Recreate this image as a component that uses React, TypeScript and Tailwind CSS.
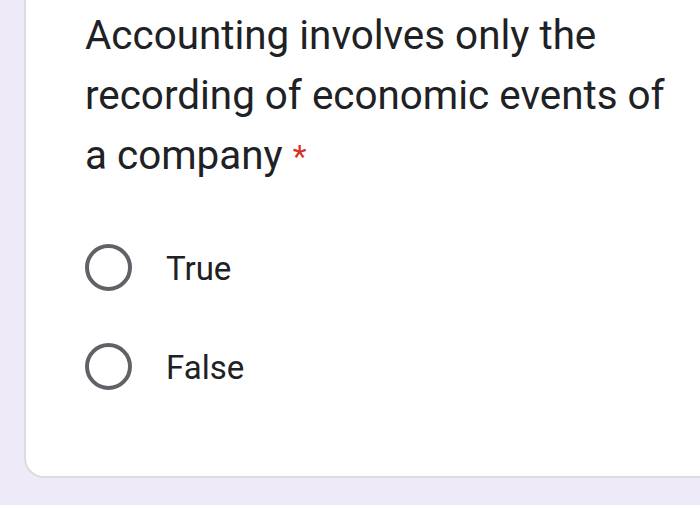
export default function App() {
  return (
    <div className="w-[700px] h-[505px] bg-[#eeeaf7] overflow-hidden">
      <div className="ml-[24px] h-[478px] bg-white border-l-2 border-b-2 border-[#dcdbe0] rounded-bl-[20px] pl-[59px] pt-[6px]">
        <div className="text-[40.4px] leading-[60px] text-[#202124] font-['Roboto',sans-serif]">
          Accounting involves only the
          <br />
          recording of economic events of
          <br />
          a company <span className="text-[#d93025] text-[32px] align-top">*</span>
        </div>
        <div className="mt-[57px] flex flex-col gap-[51px]">
          {["True", "False"].map((t) => (
            <div key={t} className="flex items-center h-[48px]">
              <div className="w-[47px] h-[47px] rounded-full border-[4px] border-[#5f6368]" />
              <span className="ml-[34px] mt-[3px] text-[33px] text-[#202124] font-['Roboto',sans-serif]">{t}</span>
            </div>
          ))}
        </div>
      </div>
    </div>
  );
}
